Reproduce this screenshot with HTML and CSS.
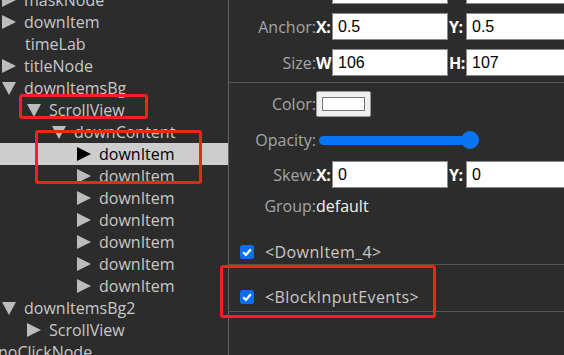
FILE: index.html
```html
<!DOCTYPE html>
<html lang="en">
<head>
    <meta charset="UTF-8">
    <meta name="viewport" content="width=device-width, initial-scale=1.0">
    <title>Node Inspector</title>
    <link rel="stylesheet" href="styles.css">
</head>
<body>

<div class="app">
    <div class="tree">
        <div class="node lvl0"><span class="tri right"></span>maskNode</div>
        <div class="node lvl0"><span class="tri right"></span>downItem</div>
        <div class="node leaf">timeLab</div>
        <div class="node lvl0"><span class="tri right"></span>titleNode</div>
        <div class="node lvl0"><span class="tri down"></span>downItemsBg</div>
        <div class="node lvl1"><span class="tri down"></span>ScrollView</div>
        <div class="node lvl2"><span class="tri down"></span>downContent</div>
        <div class="node lvl3 selected"><span class="tri right"></span>downItem</div>
        <div class="node lvl3"><span class="tri right"></span>downItem</div>
        <div class="node lvl3"><span class="tri right"></span>downItem</div>
        <div class="node lvl3"><span class="tri right"></span>downItem</div>
        <div class="node lvl3"><span class="tri right"></span>downItem</div>
        <div class="node lvl3"><span class="tri right"></span>downItem</div>
        <div class="node lvl3"><span class="tri right"></span>downItem</div>
        <div class="node lvl0"><span class="tri down"></span>downItemsBg2</div>
        <div class="node lvl1"><span class="tri right"></span>ScrollView</div>
        <div class="node root">noClickNode</div>
    </div>

    <div class="inspector">
        <div class="props">
            <div class="prop">
                <span class="label">Scale:</span>
                <span class="axis">X:</span><input class="field" type="text" value="1">
                <span class="axis second">Y:</span><input class="field" type="text" value="1">
            </div>
            <div class="prop">
                <span class="label">Anchor:</span>
                <span class="axis">X:</span><input class="field" type="text" value="0.5">
                <span class="axis second">Y:</span><input class="field" type="text" value="0.5">
            </div>
            <div class="prop">
                <span class="label">Size:</span>
                <span class="axis">W:</span><input class="field" type="text" value="106">
                <span class="axis second">H:</span><input class="field" type="text" value="107">
            </div>
        </div>

        <div class="divider"></div>

        <div class="prop color-row">
            <span class="label">Color:</span>
            <span class="swatch"><span class="swatch-fill"></span></span>
        </div>

        <div class="prop opacity-row">
            <span class="label">Opacity:</span>
            <span class="slider"><span class="thumb"></span></span>
        </div>

        <div class="prop skew-row">
            <span class="label">Skew:</span>
            <span class="axis">X:</span><input class="field" type="text" value="0">
            <span class="axis second">Y:</span><input class="field" type="text" value="0">
        </div>

        <div class="prop group-row">
            <span class="label">Group:</span>
            <span class="value">default</span>
        </div>

        <div class="component first">
            <svg class="check" width="14" height="14" viewBox="0 0 14 14">
                <rect width="14" height="14" rx="2.5" fill="#0b6ef2"/>
                <path d="M3.2 7.3 L5.9 10 L10.9 4.2" fill="none" stroke="#fff" stroke-width="2.2"/>
            </svg>
            <span class="comp-name">&lt;DownItem_4&gt;</span>
        </div>
        <div class="component second">
            <svg class="check" width="14" height="14" viewBox="0 0 14 14">
                <rect width="14" height="14" rx="2.5" fill="#0b6ef2"/>
                <path d="M3.2 7.3 L5.9 10 L10.9 4.2" fill="none" stroke="#fff" stroke-width="2.2"/>
            </svg>
            <span class="comp-name">&lt;BlockInputEvents&gt;</span>
        </div>
    </div>

    <!-- annotation boxes drawn over the screenshot -->
    <div class="mark mark-scroll"></div>
    <div class="mark mark-items"></div>
    <div class="mark mark-block"></div>
</div>

</body>
</html>
```

FILE: styles.css
```css
body {
    margin: 0;
    padding: 0;
    background-color: #2c2c2c;
    font-family: "Open Sans", "Noto Sans", sans-serif;
    font-size: 16px;
    overflow: hidden;
}
.app {
    position: relative;
    display: flex;
    width: 564px;
    height: 355px;
    overflow: hidden;
}

/* hierarchy tree */
.tree {
    width: 228px;
    flex-shrink: 0;
    border-right: 1px solid #626262;
    margin-top: -11px;
    overflow: hidden;
}
.node {
    display: flex;
    align-items: center;
    height: 22px;
    line-height: 22px;
    color: #c8c8c8;
    white-space: nowrap;
}
.node.selected {
    background-color: #cdcdcd;
    color: #000;
}
.lvl0 { padding-left: 2px; }
.lvl1 { padding-left: 27px; }
.lvl2 { padding-left: 52px; }
.lvl3 { padding-left: 77px; }
.leaf { padding-left: 25px; }
.root { padding-left: 0; margin-left: -2px; }
.tri {
    display: inline-block;
    width: 0;
    height: 0;
    margin-right: 8px;
}
.tri.right {
    border-left: 14px solid #bcbcbc;
    border-top: 7px solid transparent;
    border-bottom: 7px solid transparent;
}
.tri.down {
    border-top: 13px solid #bcbcbc;
    border-left: 7px solid transparent;
    border-right: 7px solid transparent;
    margin-top: 1px;
}
.selected .tri.right {
    border-left-color: #000;
}

/* inspector */
.inspector {
    flex: 1;
    overflow: hidden;
}
.props {
    display: flex;
    flex-direction: column;
    gap: 9px;
    margin-top: -23px;
}
.prop {
    display: flex;
    align-items: center;
    height: 27px;
    white-space: nowrap;
}
.label {
    width: 87px;
    flex-shrink: 0;
    text-align: right;
    color: #a6a6a6;
}
.axis {
    width: 16px;
    flex-shrink: 0;
    overflow: hidden;
    color: #fff;
    font-weight: bold;
    letter-spacing: -0.5px;
}
.axis.second {
    width: 17px;
    padding-left: 1px;
}
.field {
    width: 116px;
    height: 27px;
    flex-shrink: 0;
    box-sizing: border-box;
    margin: 0;
    padding: 0 0 0 5px;
    border: 1px solid #8a8a8a;
    background-color: #fff;
    color: #000;
    font-family: "Liberation Sans", Arial, sans-serif;
    font-size: 16px;
}
.divider {
    height: 1px;
    margin-top: 6px;
    background-color: #555;
}
.color-row {
    margin-top: 8px;
    height: 26px;
}
.swatch {
    display: flex;
    align-items: center;
    justify-content: center;
    width: 55px;
    height: 26px;
    box-sizing: border-box;
    background-color: #efefef;
    border: 1px solid #9a9a9a;
    border-radius: 2px;
}
.swatch-fill {
    width: 43px;
    height: 14px;
    box-sizing: border-box;
    background-color: #fff;
    border: 1px solid #767676;
}
.opacity-row {
    margin-top: 14px;
    height: 18px;
}
.slider {
    position: relative;
    width: 151px;
    height: 9px;
    margin-left: 3px;
    background-color: #0b74f4;
    border-radius: 5px;
}
.thumb {
    position: absolute;
    right: -9px;
    top: -5px;
    width: 18px;
    height: 18px;
    border-radius: 50%;
    background-color: #0b74f4;
}
.skew-row {
    margin-top: 12px;
}
.group-row {
    margin-top: 8px;
    height: 20px;
}
.value {
    color: #f2f2f2;
}
.component {
    display: flex;
    align-items: center;
    padding-left: 11px;
    border-bottom: 1px solid #555;
    color: #c8c8c8;
    white-space: nowrap;
}
.component.first {
    margin-top: 24px;
    height: 24px;
}
.component.second {
    height: 28px;
    padding-top: 18px;
}
.check {
    flex-shrink: 0;
    margin-right: 11px;
}
.comp-name {
    letter-spacing: 0.4px;
}

/* red annotation boxes */
.mark {
    position: absolute;
    border: 3px solid #f5221b;
    border-radius: 3px;
    box-sizing: border-box;
}
.mark-scroll {
    left: 19px;
    top: 94px;
    width: 129px;
    height: 25px;
}
.mark-items {
    left: 35px;
    top: 130px;
    width: 167px;
    height: 54px;
}
.mark-block {
    left: 220px;
    top: 265px;
    width: 216px;
    height: 53px;
}
```
